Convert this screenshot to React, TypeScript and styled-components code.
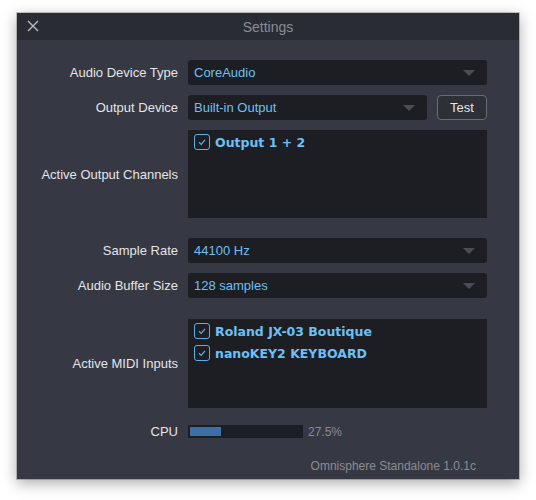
import styled, { createGlobalStyle } from "styled-components";

const Global = createGlobalStyle`
  body { margin: 0; background: #fff; font-family: "Liberation Sans", Arial, sans-serif; }
`;

const Page = styled.div`
  width: 536px;
  height: 500px;
  padding: 13px 0 0 17px;
  box-sizing: border-box;
`;

const Window = styled.div`
  width: 502px;
  height: 466px;
  background: #363843;
  box-shadow: 0 4px 14px rgba(0,0,0,0.35), 0 0 0 1px rgba(0,0,0,0.2);
  display: flex;
  flex-direction: column;
`;

const TitleBar = styled.div`
  height: 27px;
  background: #2a2c33;
  display: flex;
  align-items: center;
  justify-content: center;
  position: relative;
  color: #8a8c94;
  font-size: 14px;
`;

const Close = styled.div`
  position: absolute;
  left: 10px;
  top: 6px;
`;

const Body = styled.div`
  flex: 1;
  padding: 20px 32px 0 0;
  display: flex;
  flex-direction: column;
`;

const Row = styled.div<{ $h: number; $mt: number }>`
  display: grid;
  grid-template-columns: 161px 1fr;
  column-gap: 10px;
  height: ${p => p.$h}px;
  margin-top: ${p => p.$mt}px;
  align-items: center;
`;

const Label = styled.div`
  text-align: right;
  color: #e4e5e8;
  font-size: 13px;
`;

const Select = styled.div`
  height: 25px;
  background: #1d1e23;
  border-radius: 3px;
  display: flex;
  align-items: center;
  justify-content: space-between;
  padding: 0 12px 0 6px;
  color: #6cc0f5;
  font-size: 13px;
  flex: 1;
`;

const Caret = styled.div`
  width: 0;
  height: 0;
  border-left: 6px solid transparent;
  border-right: 6px solid transparent;
  border-top: 6px solid #4b4d55;
`;

const Inline = styled.div`
  display: flex;
  gap: 10px;
`;

const TestBtn = styled.div`
  width: 48px;
  height: 23px;
  border: 1px solid #6a6c74;
  border-radius: 4px;
  background: #2e3038;
  color: #e4e5e8;
  font-size: 13px;
  display: flex;
  align-items: center;
  justify-content: center;
`;

const ListBox = styled.div`
  height: 100%;
  background: #1d1e23;
  padding: 4px 6px;
  box-sizing: border-box;
  display: flex;
  flex-direction: column;
  gap: 6px;
`;

const Item = styled.div`
  display: flex;
  align-items: center;
  gap: 5px;
  color: #6cc0f5;
  font-size: 12.5px;
  font-family: "DejaVu Sans", sans-serif;
  font-weight: bold;
`;

const Check = styled.div`
  width: 14px;
  height: 14px;
  border: 1.5px solid #5aaee6;
  border-radius: 3px;
  display: flex;
  align-items: center;
  justify-content: center;
`;

const CpuWrap = styled.div`
  display: flex;
  align-items: center;
  gap: 5px;
  color: #8a8c94;
  font-size: 12px;
`;

const Meter = styled.div`
  width: 115px;
  height: 13px;
  background: #1d1e23;
  padding: 2px;
  box-sizing: border-box;
`;

const Fill = styled.div`
  height: 100%;
  background: #3b6fa6;
`;

const Footer = styled.div`
  margin-top: auto;
  padding: 0 11px 6px 0;
  text-align: right;
  color: #8a8c94;
  font-size: 12px;
`;

const Tick = () => (
  <svg width="10" height="10" viewBox="0 0 10 10">
    <path d="M2 5.2 L4.2 7.4 L8 2.8" stroke="#5aaee6" strokeWidth="1.3" fill="none" />
  </svg>
);

const Option = ({ text }: { text: string }) => (
  <Item><Check><Tick /></Check>{text}</Item>
);

export default function App() {
  const cpu = 27.5;
  return (
    <Page>
      <Global />
      <Window>
        <TitleBar>
          <Close>
            <svg width="12" height="12" viewBox="0 0 12 12">
              <path d="M1 1 L11 11 M11 1 L1 11" stroke="#b8bac0" strokeWidth="1.4" />
            </svg>
          </Close>
          Settings
        </TitleBar>
        <Body>
          <Row $h={25} $mt={0}>
            <Label>Audio Device Type</Label>
            <Select>CoreAudio<Caret /></Select>
          </Row>
          <Row $h={25} $mt={10}>
            <Label>Output Device</Label>
            <Inline>
              <Select>Built-in Output<Caret /></Select>
              <TestBtn>Test</TestBtn>
            </Inline>
          </Row>
          <Row $h={88} $mt={10}>
            <Label>Active Output Channels</Label>
            <ListBox><Option text="Output 1 + 2" /></ListBox>
          </Row>
          <Row $h={25} $mt={20}>
            <Label>Sample Rate</Label>
            <Select>44100 Hz<Caret /></Select>
          </Row>
          <Row $h={25} $mt={10}>
            <Label>Audio Buffer Size</Label>
            <Select>128 samples<Caret /></Select>
          </Row>
          <Row $h={89} $mt={21}>
            <Label>Active MIDI Inputs</Label>
            <ListBox>
              <Option text="Roland JX-03 Boutique" />
              <Option text="nanoKEY2 KEYBOARD" />
            </ListBox>
          </Row>
          <Row $h={14} $mt={16}>
            <Label>CPU</Label>
            <CpuWrap>
              <Meter><Fill style={{ width: `${cpu}%` }} /></Meter>
              {cpu}%
            </CpuWrap>
          </Row>
          <Footer>Omnisphere Standalone 1.0.1c</Footer>
        </Body>
      </Window>
    </Page>
  );
}
